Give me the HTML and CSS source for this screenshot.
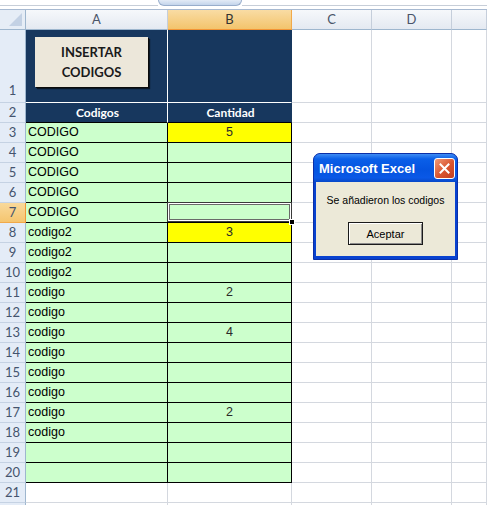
FILE: index.html
```html
<!DOCTYPE html>
<html lang="es">
<head>
    <meta charset="UTF-8">
    <meta name="viewport" content="width=device-width, initial-scale=1.0">
    <title>Insertar codigos</title>
    <link rel="stylesheet" href="styles.css">
</head>
<body>
    <div class="topbar">
        <div class="line left"></div>
        <div class="expand-tab"></div>
        <div class="line right"></div>
    </div>

    <div class="sheet">
        <div class="row colhead">
            <div class="corner"><span class="tri"></span></div>
            <div class="ch ca">A</div>
            <div class="ch cb active">B</div>
            <div class="ch cc">C</div>
            <div class="ch cd">D</div>
            <div class="ch ce"></div>
        </div>

        <div class="row tall">
            <div class="rh bottom">1</div>
            <div class="cell ca navy">
                <button class="macro-button">INSERTAR<br>CODIGOS</button>
            </div>
            <div class="cell cb navy"></div>
            <div class="cell cc"></div>
            <div class="cell cd"></div>
            <div class="cell ce"></div>
        </div>

        <div class="row">
            <div class="rh">2</div>
            <div class="cell ca navy head">Codigos</div>
            <div class="cell cb navy head">Cantidad</div>
            <div class="cell cc"></div>
            <div class="cell cd"></div>
            <div class="cell ce"></div>
        </div>

        <div class="row">
            <div class="rh">3</div>
            <div class="cell ca green">CODIGO</div>
            <div class="cell cb yellow num">5</div>
            <div class="cell cc"></div><div class="cell cd"></div><div class="cell ce"></div>
        </div>
        <div class="row">
            <div class="rh">4</div>
            <div class="cell ca green">CODIGO</div>
            <div class="cell cb green num"></div>
            <div class="cell cc"></div><div class="cell cd"></div><div class="cell ce"></div>
        </div>
        <div class="row">
            <div class="rh">5</div>
            <div class="cell ca green">CODIGO</div>
            <div class="cell cb green num"></div>
            <div class="cell cc"></div><div class="cell cd"></div><div class="cell ce"></div>
        </div>
        <div class="row">
            <div class="rh">6</div>
            <div class="cell ca green">CODIGO</div>
            <div class="cell cb green num"></div>
            <div class="cell cc"></div><div class="cell cd"></div><div class="cell ce"></div>
        </div>
        <div class="row">
            <div class="rh active">7</div>
            <div class="cell ca green">CODIGO</div>
            <div class="cell cb green num selected"><span class="sel-box"></span><span class="fill-handle"></span></div>
            <div class="cell cc"></div><div class="cell cd"></div><div class="cell ce"></div>
        </div>
        <div class="row">
            <div class="rh">8</div>
            <div class="cell ca green">codigo2</div>
            <div class="cell cb yellow num">3</div>
            <div class="cell cc"></div><div class="cell cd"></div><div class="cell ce"></div>
        </div>
        <div class="row">
            <div class="rh">9</div>
            <div class="cell ca green">codigo2</div>
            <div class="cell cb green num"></div>
            <div class="cell cc"></div><div class="cell cd"></div><div class="cell ce"></div>
        </div>
        <div class="row">
            <div class="rh">10</div>
            <div class="cell ca green">codigo2</div>
            <div class="cell cb green num"></div>
            <div class="cell cc"></div><div class="cell cd"></div><div class="cell ce"></div>
        </div>
        <div class="row">
            <div class="rh">11</div>
            <div class="cell ca green">codigo</div>
            <div class="cell cb green num">2</div>
            <div class="cell cc"></div><div class="cell cd"></div><div class="cell ce"></div>
        </div>
        <div class="row">
            <div class="rh">12</div>
            <div class="cell ca green">codigo</div>
            <div class="cell cb green num"></div>
            <div class="cell cc"></div><div class="cell cd"></div><div class="cell ce"></div>
        </div>
        <div class="row">
            <div class="rh">13</div>
            <div class="cell ca green">codigo</div>
            <div class="cell cb green num">4</div>
            <div class="cell cc"></div><div class="cell cd"></div><div class="cell ce"></div>
        </div>
        <div class="row">
            <div class="rh">14</div>
            <div class="cell ca green">codigo</div>
            <div class="cell cb green num"></div>
            <div class="cell cc"></div><div class="cell cd"></div><div class="cell ce"></div>
        </div>
        <div class="row">
            <div class="rh">15</div>
            <div class="cell ca green">codigo</div>
            <div class="cell cb green num"></div>
            <div class="cell cc"></div><div class="cell cd"></div><div class="cell ce"></div>
        </div>
        <div class="row">
            <div class="rh">16</div>
            <div class="cell ca green">codigo</div>
            <div class="cell cb green num"></div>
            <div class="cell cc"></div><div class="cell cd"></div><div class="cell ce"></div>
        </div>
        <div class="row">
            <div class="rh">17</div>
            <div class="cell ca green">codigo</div>
            <div class="cell cb green num">2</div>
            <div class="cell cc"></div><div class="cell cd"></div><div class="cell ce"></div>
        </div>
        <div class="row">
            <div class="rh">18</div>
            <div class="cell ca green">codigo</div>
            <div class="cell cb green num"></div>
            <div class="cell cc"></div><div class="cell cd"></div><div class="cell ce"></div>
        </div>
        <div class="row">
            <div class="rh">19</div>
            <div class="cell ca green"></div>
            <div class="cell cb green num"></div>
            <div class="cell cc"></div><div class="cell cd"></div><div class="cell ce"></div>
        </div>
        <div class="row">
            <div class="rh">20</div>
            <div class="cell ca green"></div>
            <div class="cell cb green num"></div>
            <div class="cell cc"></div><div class="cell cd"></div><div class="cell ce"></div>
        </div>
        <div class="row">
            <div class="rh">21</div>
            <div class="cell ca"></div>
            <div class="cell cb"></div>
            <div class="cell cc"></div><div class="cell cd"></div><div class="cell ce"></div>
        </div>
        <div class="row">
            <div class="rh"></div>
            <div class="cell ca"></div>
            <div class="cell cb"></div>
            <div class="cell cc"></div><div class="cell cd"></div><div class="cell ce"></div>
        </div>
    </div>

    <div class="msgbox">
        <div class="msgbox-title">
            <span>Microsoft Excel</span>
            <button class="close-btn">
                <svg width="11" height="11" viewBox="0 0 11 11">
                    <path d="M1.5 1.5 L9.5 9.5 M9.5 1.5 L1.5 9.5" stroke="#fff" stroke-width="2" stroke-linecap="square"/>
                </svg>
            </button>
        </div>
        <div class="msgbox-body">
            <p>Se añadieron los codigos</p>
            <button class="ok-btn">Aceptar</button>
        </div>
    </div>
</body>
</html>
```

FILE: styles.css
```css
body {
    margin: 0;
    background-color: #fff;
    font-family: "Liberation Sans", Arial, sans-serif;
    overflow: hidden;
}
.topbar {
    display: flex;
    height: 9px;
    border-bottom: 1px solid #a7b9d1;
}
.line {
    height: 5px;
    border-bottom: 1px solid #c7ced8;
}
.line.left {
    width: 158px;
}
.line.right {
    flex: 1;
}
.expand-tab {
    width: 82px;
    height: 5px;
    background: linear-gradient(#e3ebf6, #c3d4eb);
    border: 1px solid #98adcb;
    border-top: none;
    border-radius: 0 0 9px 9px;
}

.row {
    display: flex;
    height: 20px;
}
.row.tall {
    height: 73px;
}
.row > div {
    box-sizing: border-box;
}

.ca { width: 142px; }
.cb { width: 124px; }
.cc, .cd { width: 80px; }
.ce { flex: 1; }

/* column headers */
.colhead .ch {
    background: linear-gradient(#f6f8fb, #e4e9f1);
    border-right: 1px solid #c5cedb;
    border-bottom: 1px solid #9eb6ce;
    color: #4a5469;
    font-family: Lato, sans-serif;
    font-size: 13px;
    line-height: 19px;
    text-align: center;
}
.colhead .ch.active {
    background: linear-gradient(#f9dca4, #f3c46c);
    border-right-color: #f1a94a;
    border-bottom-color: #f29536;
    color: #333;
}
.corner {
    width: 26px;
    background: #e6edf6;
    border-right: 1px solid #9eb6ce;
    border-bottom: 1px solid #9eb6ce;
    position: relative;
}
.tri {
    position: absolute;
    right: 3px;
    bottom: 3px;
    width: 0;
    height: 0;
    border-left: 13px solid transparent;
    border-bottom: 13px solid #c3d1e4;
}

/* row headers */
.rh {
    width: 26px;
    background: #e4ecf7;
    border-right: 1px solid #9eb6ce;
    border-bottom: 1px solid #c5d2e3;
    color: #44546e;
    font-family: Lato, sans-serif;
    font-size: 13px;
    line-height: 19px;
    text-align: center;
}
.rh.bottom {
    display: flex;
    align-items: flex-end;
    justify-content: center;
    padding-bottom: 2px;
}
.rh.active {
    background: linear-gradient(#f9d99b, #f5c56f);
    border-bottom-color: #f1a94a;
    border-right-color: #f29536;
}

/* cells */
.cell {
    border-right: 1px solid #d4d8df;
    border-bottom: 1px solid #d4d8df;
    font-size: 12.5px;
    line-height: 19px;
    padding-left: 2px;
    white-space: nowrap;
}
.cell.navy {
    background-color: #17375e;
    border-right-color: #fff;
    border-bottom-color: #fff;
}
.cb.navy {
    border-right-color: #17375e;
}
.cell.head {
    color: #fff;
    font-family: Lato, sans-serif;
    font-weight: bold;
    font-size: 12px;
    text-align: center;
    border-bottom-color: #000;
}
.cell.green {
    background-color: #ccffcc;
    border-right-color: #000;
    border-bottom-color: #000;
    color: #000;
}
.cell.yellow {
    background-color: #ffff00;
    border-right-color: #000;
    border-bottom-color: #000;
}
.cell.num {
    text-align: center;
    color: #2a2a2a;
    padding-left: 0;
}
.cell.selected {
    position: relative;
}
.sel-box {
    position: absolute;
    left: -1px;
    top: -1px;
    right: -1px;
    bottom: 0;
    border: 1px solid #3a3a3a;
    box-shadow: inset 0 0 0 1px #fff, inset 0 0 0 2px #6a6a6a;
}
.fill-handle {
    position: absolute;
    right: -4px;
    bottom: -3px;
    width: 4px;
    height: 4px;
    background: #000;
    border: 1px solid #fff;
}

.macro-button {
    margin: 7px 0 0 7px;
    width: 113px;
    height: 50px;
    background-color: #ece7da;
    border: none;
    box-shadow: 1px 1px 0 #0b0b0b, 2px 2px 1px rgba(0, 0, 0, 0.6);
    color: #1a1a1a;
    font-family: Lato, sans-serif;
    font-weight: bold;
    font-size: 13px;
    line-height: 20px;
    padding: 0;
}

/* message box */
.msgbox {
    position: absolute;
    left: 313px;
    top: 153px;
    width: 145px;
    height: 107px;
    box-sizing: border-box;
    background: #0842d0;
    border: 1px solid #0a2fa8;
    border-radius: 7px 7px 0 0;
    padding: 0 2px 3px;
    display: flex;
    flex-direction: column;
}
.msgbox-title {
    height: 28px;
    display: flex;
    align-items: center;
    justify-content: space-between;
    padding: 0 2px 0 5px;
    background: linear-gradient(#3f8cf3 0%, #0a5fe8 18%, #0554e0 55%, #0a58e6 85%, #0748c8 100%);
    border-radius: 6px 6px 0 0;
    margin: 0 -2px;
    color: #fff;
    font-weight: bold;
    font-size: 13px;
}
.close-btn {
    width: 21px;
    height: 21px;
    padding: 0;
    border: 1px solid #fff;
    border-radius: 3px;
    background: linear-gradient(135deg, #f09a78, #d9542f 55%, #c23f22);
    display: flex;
    align-items: center;
    justify-content: center;
}
.msgbox-body {
    flex: 1;
    background-color: #ece9d8;
    text-align: center;
}
.msgbox-body p {
    margin: 12px 0 0;
    font-size: 10.5px;
    line-height: 13px;
    color: #000;
}
.ok-btn {
    margin-top: 15px;
    width: 75px;
    height: 23px;
    background-color: #ece9d8;
    border: 1px solid #1a1a1a;
    box-shadow: inset 1px 1px 0 #fff, inset -1px -1px 0 #8a8a8a;
    font-family: "Liberation Sans", Arial, sans-serif;
    font-size: 11px;
    color: #000;
    padding: 0;
}
```
